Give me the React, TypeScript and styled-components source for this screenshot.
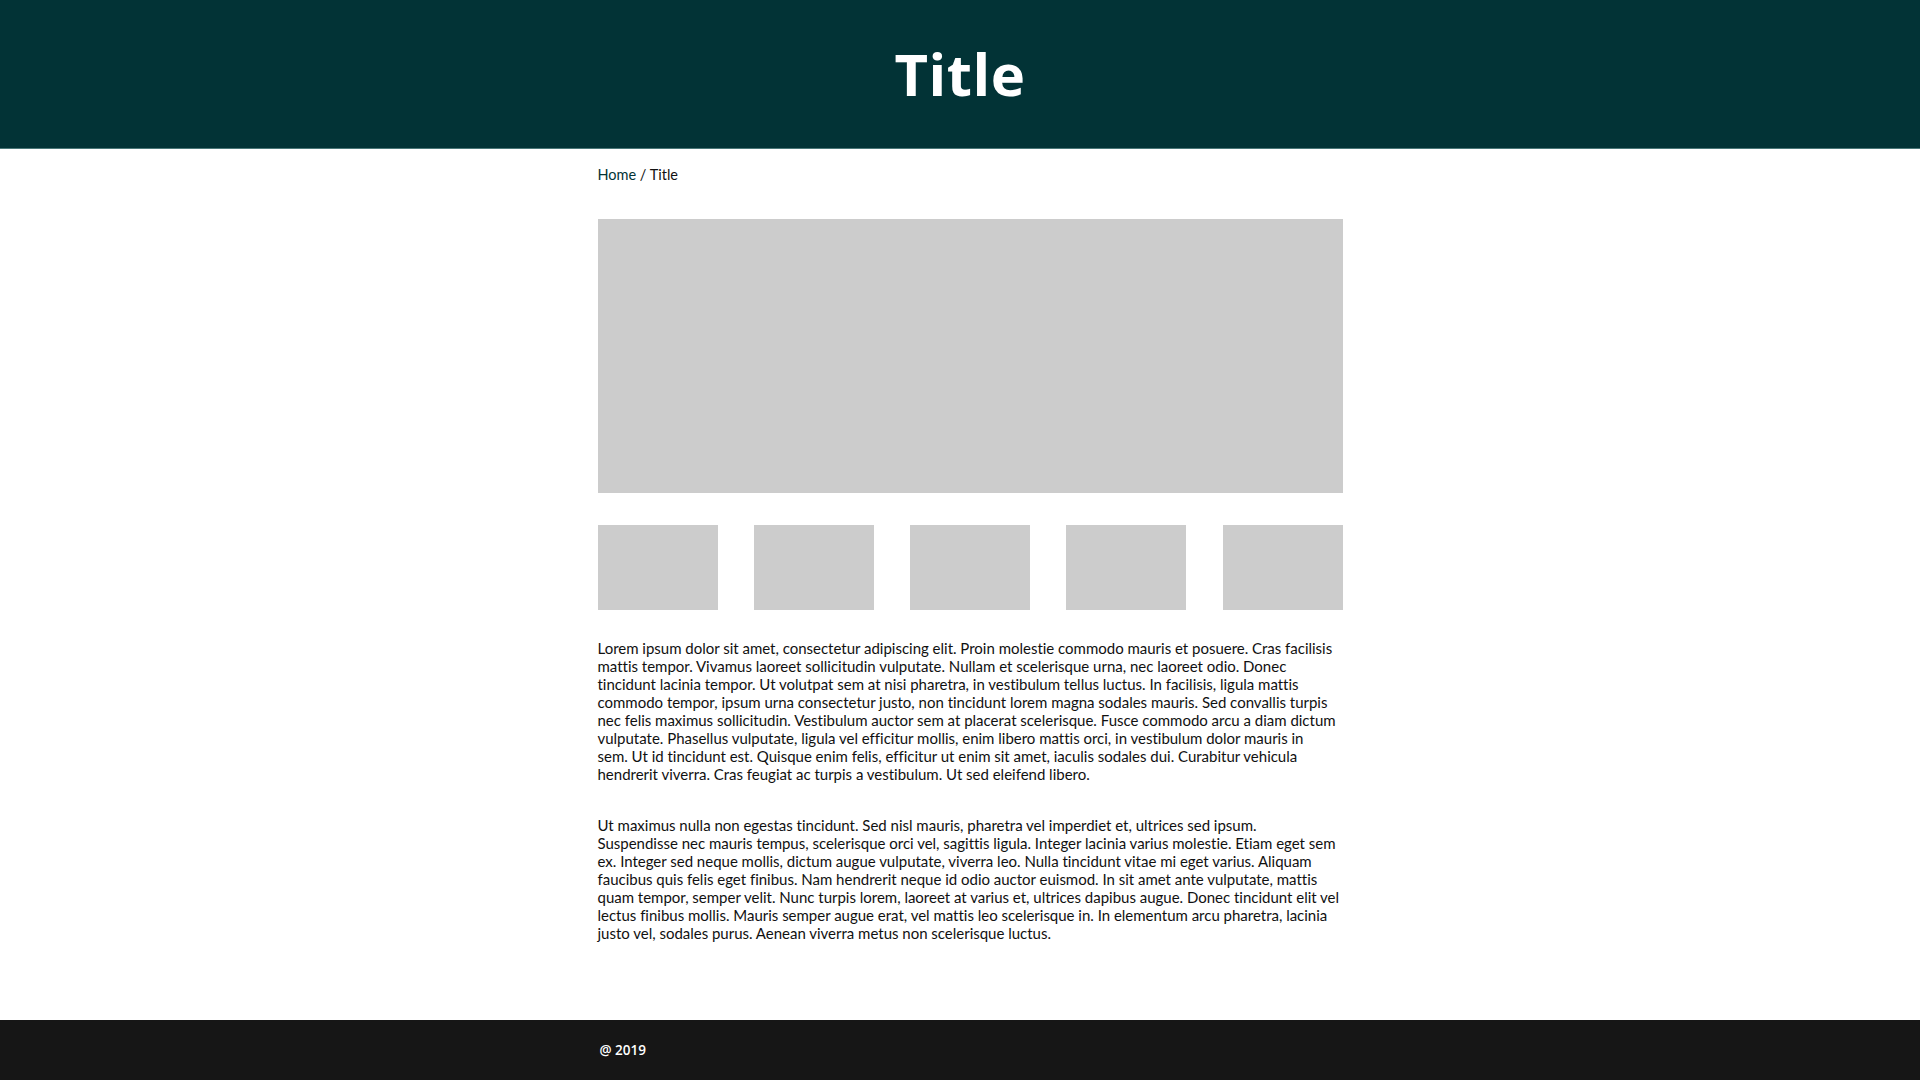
import React from "react";
import styled, { createGlobalStyle } from "styled-components";

const Global = createGlobalStyle`
  html, body { margin: 0; padding: 0; background: #ffffff; }
  body { font-family: "Lato", "Open Sans", sans-serif; color: #111; }
  * { box-sizing: border-box; }
`;

const Page = styled.div`
  display: flex;
  flex-direction: column;
  min-height: 1080px;
`;

const Header = styled.header`
  height: 149px;
  background: #023336;
  border-bottom: 1px solid #4a7778;
  display: flex;
  align-items: center;
  justify-content: center;
`;

const Title = styled.h1`
  margin: 0;
  padding-bottom: 2px;
  font-family: "Open Sans", sans-serif;
  font-weight: 700;
  font-size: 58px;
  letter-spacing: 0.5px;
  color: #ffffff;
`;

const Main = styled.main`
  flex: 1;
  width: 765px;
  margin: 0 auto;
  padding: 17px 0 0 20px;
`;

const Crumbs = styled.nav`
  font-size: 14.5px;
  line-height: 17px;
  color: #111;
`;

const CrumbLink = styled.a`
  color: #023336;
  text-decoration: none;
`;

const Hero = styled.div`
  margin-top: 36px;
  height: 274px;
  background: #cccccc;
`;

const Thumbs = styled.div`
  margin-top: 32px;
  display: flex;
  justify-content: space-between;
`;

const Thumb = styled.div`
  width: 120px;
  height: 85px;
  background: #cccccc;
`;

const Text = styled.p<{ $gap: number }>`
  margin: ${(p) => p.$gap}px 0 0;
  font-size: 15px;
  line-height: 18px;
  letter-spacing: -0.01px;
  font-variant-ligatures: no-common-ligatures;
  color: #111;
`;

const Line = styled.span`
  display: block;
  white-space: nowrap;
`;

const Footer = styled.footer`
  height: 60px;
  background: #161616;
  display: flex;
  align-items: center;
`;

const FooterInner = styled.div`
  width: 765px;
  margin: 0 auto;
  padding: 0 0 0 22px;
  color: #ffffff;
  font-family: "Open Sans", sans-serif;
  font-weight: 600;
  font-size: 13.5px;
`;

const paragraphs: string[][] = [
  [
    "Lorem ipsum dolor sit amet, consectetur adipiscing elit. Proin molestie commodo mauris et posuere. Cras facilisis",
    "mattis tempor. Vivamus laoreet sollicitudin vulputate. Nullam et scelerisque urna, nec laoreet odio. Donec",
    "tincidunt lacinia tempor. Ut volutpat sem at nisi pharetra, in vestibulum tellus luctus. In facilisis, ligula mattis",
    "commodo tempor, ipsum urna consectetur justo, non tincidunt lorem magna sodales mauris. Sed convallis turpis",
    "nec felis maximus sollicitudin. Vestibulum auctor sem at placerat scelerisque. Fusce commodo arcu a diam dictum",
    "vulputate. Phasellus vulputate, ligula vel efficitur mollis, enim libero mattis orci, in vestibulum dolor mauris in",
    "sem. Ut id tincidunt est. Quisque enim felis, efficitur ut enim sit amet, iaculis sodales dui. Curabitur vehicula",
    "hendrerit viverra. Cras feugiat ac turpis a vestibulum. Ut sed eleifend libero.",
  ],
  [
    "Ut maximus nulla non egestas tincidunt. Sed nisl mauris, pharetra vel imperdiet et, ultrices sed ipsum.",
    "Suspendisse nec mauris tempus, scelerisque orci vel, sagittis ligula. Integer lacinia varius molestie. Etiam eget sem",
    "ex. Integer sed neque mollis, dictum augue vulputate, viverra leo. Nulla tincidunt vitae mi eget varius. Aliquam",
    "faucibus quis felis eget finibus. Nam hendrerit neque id odio auctor euismod. In sit amet ante vulputate, mattis",
    "quam tempor, semper velit. Nunc turpis lorem, laoreet at varius et, ultrices dapibus augue. Donec tincidunt elit vel",
    "lectus finibus mollis. Mauris semper augue erat, vel mattis leo scelerisque in. In elementum arcu pharetra, lacinia",
    "justo vel, sodales purus. Aenean viverra metus non scelerisque luctus.",
  ],
];

export default function App() {
  return (
    <>
      <Global />
      <Page>
        <Header>
          <Title>Title</Title>
        </Header>
        <Main>
          <Crumbs>
            <CrumbLink href="#">Home</CrumbLink> / Title
          </Crumbs>
          <Hero />
          <Thumbs>
            {[0, 1, 2, 3, 4].map((i) => (
              <Thumb key={i} />
            ))}
          </Thumbs>
          {paragraphs.map((lines, p) => (
            <Text key={p} $gap={p === 0 ? 29 : 33}>
              {lines.map((line, i) => (
                <Line key={i}>{line}</Line>
              ))}
            </Text>
          ))}
        </Main>
        <Footer>
          <FooterInner>@ 2019</FooterInner>
        </Footer>
      </Page>
    </>
  );
}
